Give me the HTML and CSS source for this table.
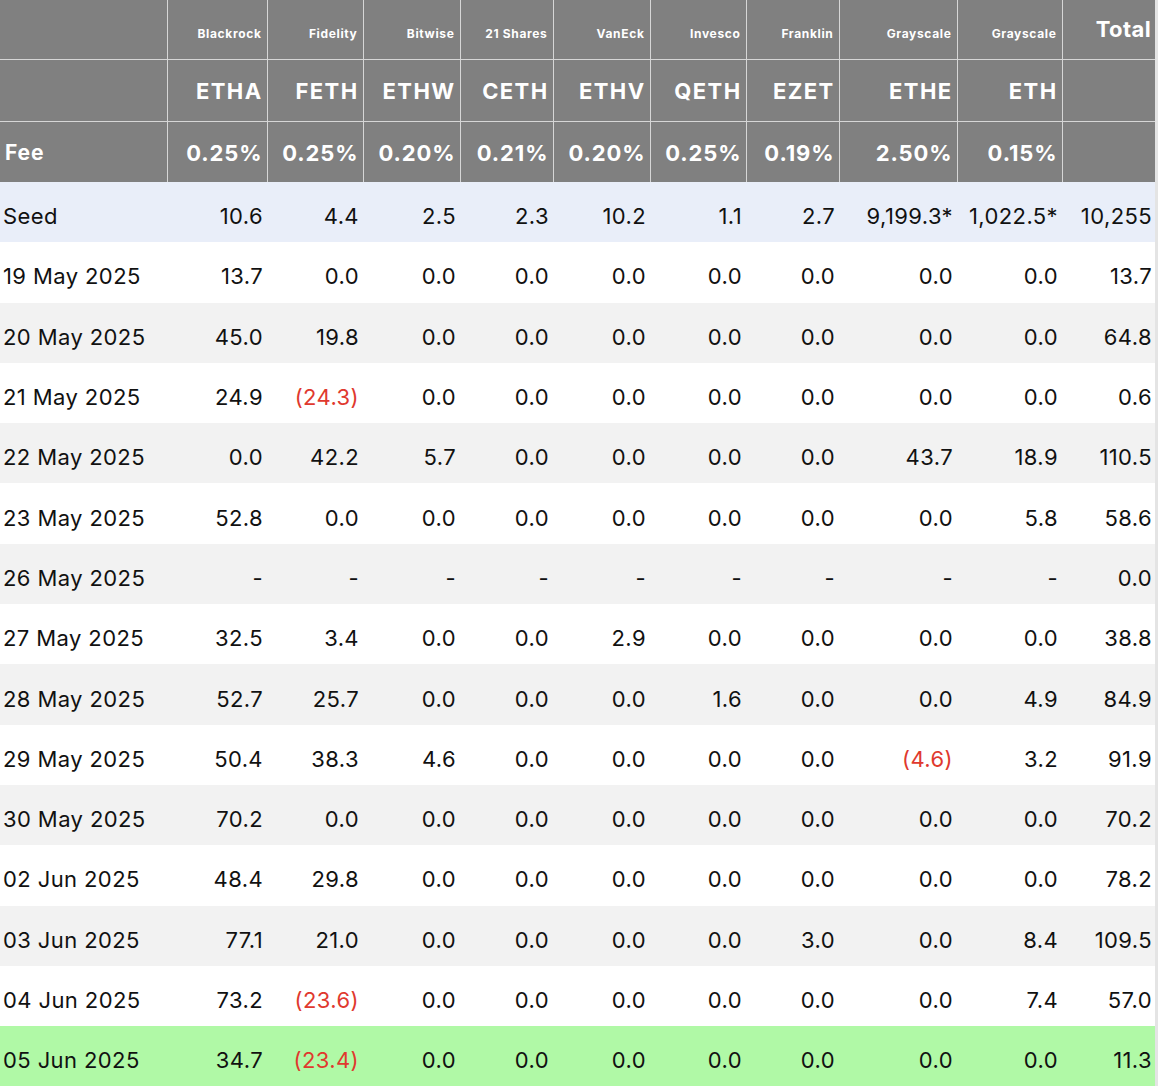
FILE: index.html
```html
<!DOCTYPE html>
<html>
<head>
<meta charset="utf-8">
<link rel="stylesheet" href="styles.css">
</head>
<body>
<table class="flows">
<colgroup>
<col class="c-date"><col class="c1"><col class="c2"><col class="c3"><col class="c4"><col class="c5"><col class="c6"><col class="c7"><col class="c8"><col class="c9"><col class="c10">
</colgroup>
<thead>
<tr class="h-issuer">
<th></th><th>Blackrock</th><th>Fidelity</th><th>Bitwise</th><th>21 Shares</th><th>VanEck</th><th>Invesco</th><th>Franklin</th><th>Grayscale</th><th>Grayscale</th><th class="total">Total</th>
</tr>
<tr class="h-ticker">
<th></th><th>ETHA</th><th>FETH</th><th>ETHW</th><th>CETH</th><th>ETHV</th><th>QETH</th><th>EZET</th><th>ETHE</th><th>ETH</th><th></th>
</tr>
<tr class="h-fee">
<th class="label">Fee</th><th>0.25%</th><th>0.25%</th><th>0.20%</th><th>0.21%</th><th>0.20%</th><th>0.25%</th><th>0.19%</th><th>2.50%</th><th>0.15%</th><th></th>
</tr>
</thead>
<tbody>
<tr class="seed"><td>Seed</td><td>10.6</td><td>4.4</td><td>2.5</td><td>2.3</td><td>10.2</td><td>1.1</td><td>2.7</td><td>9,199.3*</td><td>1,022.5*</td><td>10,255</td></tr>
<tr><td>19 May 2025</td><td>13.7</td><td>0.0</td><td>0.0</td><td>0.0</td><td>0.0</td><td>0.0</td><td>0.0</td><td>0.0</td><td>0.0</td><td>13.7</td></tr>
<tr class="alt"><td>20 May 2025</td><td>45.0</td><td>19.8</td><td>0.0</td><td>0.0</td><td>0.0</td><td>0.0</td><td>0.0</td><td>0.0</td><td>0.0</td><td>64.8</td></tr>
<tr><td>21 May 2025</td><td>24.9</td><td class="neg">(24.3)</td><td>0.0</td><td>0.0</td><td>0.0</td><td>0.0</td><td>0.0</td><td>0.0</td><td>0.0</td><td>0.6</td></tr>
<tr class="alt"><td>22 May 2025</td><td>0.0</td><td>42.2</td><td>5.7</td><td>0.0</td><td>0.0</td><td>0.0</td><td>0.0</td><td>43.7</td><td>18.9</td><td>110.5</td></tr>
<tr><td>23 May 2025</td><td>52.8</td><td>0.0</td><td>0.0</td><td>0.0</td><td>0.0</td><td>0.0</td><td>0.0</td><td>0.0</td><td>5.8</td><td>58.6</td></tr>
<tr class="alt"><td>26 May 2025</td><td>-</td><td>-</td><td>-</td><td>-</td><td>-</td><td>-</td><td>-</td><td>-</td><td>-</td><td>0.0</td></tr>
<tr><td>27 May 2025</td><td>32.5</td><td>3.4</td><td>0.0</td><td>0.0</td><td>2.9</td><td>0.0</td><td>0.0</td><td>0.0</td><td>0.0</td><td>38.8</td></tr>
<tr class="alt"><td>28 May 2025</td><td>52.7</td><td>25.7</td><td>0.0</td><td>0.0</td><td>0.0</td><td>1.6</td><td>0.0</td><td>0.0</td><td>4.9</td><td>84.9</td></tr>
<tr><td>29 May 2025</td><td>50.4</td><td>38.3</td><td>4.6</td><td>0.0</td><td>0.0</td><td>0.0</td><td>0.0</td><td class="neg">(4.6)</td><td>3.2</td><td>91.9</td></tr>
<tr class="alt"><td>30 May 2025</td><td>70.2</td><td>0.0</td><td>0.0</td><td>0.0</td><td>0.0</td><td>0.0</td><td>0.0</td><td>0.0</td><td>0.0</td><td>70.2</td></tr>
<tr><td>02 Jun 2025</td><td>48.4</td><td>29.8</td><td>0.0</td><td>0.0</td><td>0.0</td><td>0.0</td><td>0.0</td><td>0.0</td><td>0.0</td><td>78.2</td></tr>
<tr class="alt"><td>03 Jun 2025</td><td>77.1</td><td>21.0</td><td>0.0</td><td>0.0</td><td>0.0</td><td>0.0</td><td>3.0</td><td>0.0</td><td>8.4</td><td>109.5</td></tr>
<tr><td>04 Jun 2025</td><td>73.2</td><td class="neg">(23.6)</td><td>0.0</td><td>0.0</td><td>0.0</td><td>0.0</td><td>0.0</td><td>0.0</td><td>7.4</td><td>57.0</td></tr>
<tr class="latest"><td>05 Jun 2025</td><td>34.7</td><td class="neg">(23.4)</td><td>0.0</td><td>0.0</td><td>0.0</td><td>0.0</td><td>0.0</td><td>0.0</td><td>0.0</td><td>11.3</td></tr>
</tbody>
</table>
</body>
</html>
```
FILE: styles.css
```css
html, body {
  margin: 0;
  padding: 0;
}
body {
  background: #e4e4e4;
  font-family: Inter, "Noto Sans", "Liberation Sans", sans-serif;
  color: #111;
  overflow: hidden;
  height: 1086px;
}
.flows {
  width: 1155px;
  table-layout: fixed;
  border-collapse: collapse;
  border-spacing: 0;
}
.c-date { width: 167px; }
.c1 { width: 100px; }
.c2 { width: 96px; }
.c3 { width: 97px; }
.c4 { width: 93px; }
.c5 { width: 97px; }
.c6 { width: 96px; }
.c7 { width: 93px; }
.c8 { width: 118px; }
.c9 { width: 105px; }
.c10 { width: 93px; }

.flows th {
  background: #808080;
  color: #fff;
  text-align: right;
  font-weight: 700;
  padding: 0 5px 0 0;
  border: 1px solid #d6d6d6;
  white-space: nowrap;
  vertical-align: middle;
}
.flows thead tr:first-child th { border-top: none; }
.flows th:first-child { border-left: none; }
.flows th:last-child { border-right: none; }
.flows thead tr:last-child th { border-bottom: none; }

.h-issuer th {
  height: 59px;
  font-size: 12px;
  letter-spacing: 0.65px;
  padding-top: 8px;
  box-sizing: border-box;
}
.h-issuer th.total {
  font-size: 22px;
  letter-spacing: 0.4px;
  padding-top: 0;
  padding-right: 4px;
}
.h-ticker th {
  height: 62px;
  font-size: 22px;
  letter-spacing: 1.4px;
  padding-right: 4px;
  padding-top: 2px;
  box-sizing: border-box;
}
.h-fee th {
  height: 61px;
  font-size: 22px;
  letter-spacing: 0.9px;
  padding-right: 4px;
  padding-top: 2px;
  box-sizing: border-box;
}
.h-fee th.label {
  text-align: left;
  padding-left: 5px;
  font-size: 21px;
}

.flows td {
  height: 60.3px;
  box-sizing: border-box;
  font-size: 22px;
  text-align: right;
  padding: 8px 4px 0 0;
  white-space: nowrap;
  vertical-align: middle;
  background: #fff;
  letter-spacing: 0.4px;
}
.flows td:first-child {
  text-align: left;
  padding-left: 3px;
}
.flows td:last-child { padding-right: 3px; }
.flows tr.alt td { background: #f2f2f2; }
.flows tr.seed td { background: #e9eef9; }
.flows tr.latest td { background: #b0f9a6; }
.flows td.neg { color: #e0392e; }
```
